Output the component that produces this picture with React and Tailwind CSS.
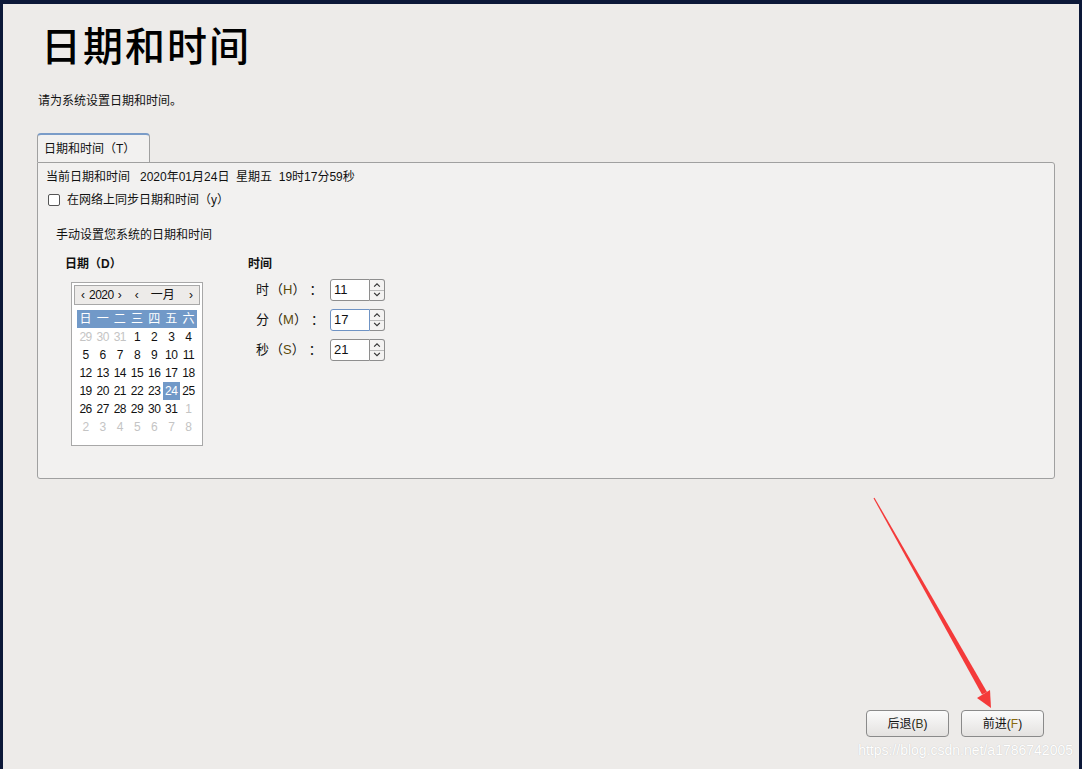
import React from "react";

const days = [
  [29, 30, 31, 1, 2, 3, 4],
  [5, 6, 7, 8, 9, 10, 11],
  [12, 13, 14, 15, 16, 17, 18],
  [19, 20, 21, 22, 23, 24, 25],
  [26, 27, 28, 29, 30, 31, 1],
  [2, 3, 4, 5, 6, 7, 8],
];
const weekdays = ["日", "一", "二", "三", "四", "五", "六"];

const Spin = ({ value, focused }) => (
  <div className="flex h-[22px] w-[55px]">
    <div
      className={`flex w-[40px] items-center rounded-l-[3px] border bg-white pl-[3px] text-[13px] ${
        focused ? "border-[#6f93c4]" : "border-[#8e8e8e]"
      }`}
    >
      {value}
    </div>
    <div className="flex w-[15px] flex-col rounded-r-[3px] border border-l-0 border-[#8e8e8e] bg-[#f4f3f2]">
      <svg viewBox="0 0 14 10" className="h-[10px] w-[14px]">
        <path d="M4 7 L7 4 L10 7" stroke="#333" strokeWidth="1.2" fill="none" />
      </svg>
      <div className="h-px bg-[#bbb]" />
      <svg viewBox="0 0 14 10" className="h-[10px] w-[14px]">
        <path d="M4 3 L7 6 L10 3" stroke="#333" strokeWidth="1.2" fill="none" />
      </svg>
    </div>
  </div>
);

const TimeRow = ({ label, k, value, focused }) => (
  <div className="flex h-[22px] items-center">
    <span className="flex w-[82px] items-center pl-[8px] text-[13px]">
      <span>{label}</span>
      <span className="ml-[1px]">（</span>
      <span className="text-[#5c4a08]">{k}</span>
      <span>）</span>
      <span className="ml-[4px]">：</span>
    </span>
    <Spin value={value} focused={focused} />
  </div>
);

export default function App() {
  return (
    <div
      className="h-[769px] w-[1082px] overflow-hidden border-l-[3px] border-r-[3px] border-t-[4px] border-[#0c1838] bg-[#edebe9] text-[#111]"
      style={{ fontFamily: '"Liberation Sans", "Noto Sans CJK SC", sans-serif' }}
    >
      <div className="relative h-full">
        <h1 className="pl-[38px] pt-[19px] text-[40px] leading-[48px] font-medium tracking-[2px] text-black">
          日期和时间
        </h1>
        <p className="mt-[22px] pl-[35px] text-[12px] leading-[16px]">请为系统设置日期和时间。</p>

        {/* tab */}
        <div className="ml-[34px] mt-[24px] mr-[24px]">
          <div className="flex h-[29px] w-[113px] items-center rounded-t-[4px] border border-b-0 border-t-2 border-[#a0a0a0] border-t-[#7a9cc8] bg-[#f2f1f0] pl-[6px] text-[12px]">
            日期和时间（T）
          </div>
          <div className="h-[317px] rounded-b-[3px] rounded-tr-[3px] border border-[#a0a0a0] bg-[#f2f1f0] pl-[8px] pt-[6px] text-[12px]">
            <div className="leading-[16px]">当前日期和时间&nbsp;&nbsp;&nbsp;2020年01月24日&nbsp;&nbsp;星期五&nbsp;&nbsp;19时17分59秒</div>
            <div className="mt-[6px] flex items-center gap-[7px] pl-[2px]">
              <div className="h-[12px] w-[12px] rounded-[2px] border border-[#555] bg-white" />
              <span>在网络上同步日期和时间（y）</span>
            </div>
            <div className="mt-[17px] pl-[10px]">手动设置您系统的日期和时间</div>

            <div className="mt-[11px] flex">
              {/* date */}
              <div className="w-[202px] pl-[19px]">
                <div className="font-bold">日期（D）</div>
                <div className="ml-[6px] mt-[9px] h-[164px] w-[132px] border border-[#a8a8a8] bg-white p-[2px]">
                  <div className="flex h-[20px] items-center border border-[#a8a8a8] bg-[#edebe9] text-[12px]">
                    <span className="pl-[6px]">‹</span>
                    <span className="px-[4px] tracking-[-0.5px]">2020</span>
                    <span>›</span>
                    <span className="pl-[13px]">‹</span>
                    <span className="pl-[12px]">一月</span>
                    <span className="ml-auto pr-[6px]">›</span>
                  </div>
                  <div className="mt-[5px] px-[3px]">
                    <div className="grid h-[18px] grid-cols-7 bg-[#7199c8] text-white">
                      {weekdays.map((w) => (
                        <span key={w} className="text-center leading-[18px]">
                          {w}
                        </span>
                      ))}
                    </div>
                    {days.map((row, r) => (
                      <div key={r} className="grid h-[18px] grid-cols-7">
                        {row.map((d, c) => {
                          const other = (r === 0 && d > 20) || (r >= 4 && d < 20);
                          const sel = r === 3 && d === 24;
                          return (
                            <span
                              key={c}
                              className={`text-center leading-[18px] tracking-[-0.5px] ${
                                sel ? "bg-[#7199c8] text-white" : other ? "text-[#c4c4c4]" : ""
                              }`}
                            >
                              {d}
                            </span>
                          );
                        })}
                      </div>
                    ))}
                  </div>
                </div>
              </div>
              {/* time */}
              <div>
                <div className="font-bold">时间</div>
                <div className="mt-[6px] flex flex-col gap-[8px]">
                  <TimeRow label="时" k="H" value="11" />
                  <TimeRow label="分" k="M" value="17" focused />
                  <TimeRow label="秒" k="S" value="21" />
                </div>
              </div>
            </div>
          </div>
        </div>

        {/* buttons */}
        <div className="absolute bottom-[32px] right-[35px] flex gap-[12px] text-[12px]">
          <button className="h-[27px] w-[83px] rounded-[4px] border border-[#8a8a8a] bg-gradient-to-b from-[#fbfbfb] to-[#e4e2e0]">
            后退(<span className="text-[#3a3a20]">B</span>)
          </button>
          <button className="h-[27px] w-[83px] rounded-[4px] border border-[#8a8a8a] bg-gradient-to-b from-[#fbfbfb] to-[#e4e2e0]">
            前进(<span className="text-[#8a6a10]">F</span>)
          </button>
        </div>

        {/* watermark */}
        <div className="absolute bottom-[8px] right-[6px] text-[14px] text-white" style={{ textShadow: "0 0 1px #bbb" }}>
          https://blog.csdn.net/a1786742005
        </div>

        {/* annotation arrow */}
        <svg className="pointer-events-none absolute left-0 top-0" width="1076" height="765">
          <path d="M870.5 494.3 L871.5 493.7 L984 688 L979 690.5 Z" fill="#f43a3a" />
          <path d="M974 694 L987 686 L988 704 Z" fill="#f43a3a" />
        </svg>
      </div>
    </div>
  );
}
